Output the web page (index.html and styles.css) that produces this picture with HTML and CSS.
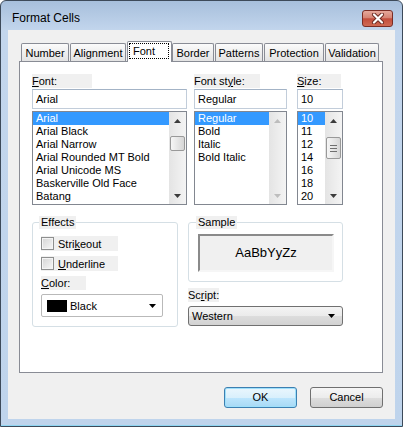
FILE: index.html
```html
<!DOCTYPE html>
<html>
<head>
    <title>Format Cells</title>
    <link rel="stylesheet" href="styles.css">
</head>
<body>
<div class="window">
    <div class="titlebar">
        <span class="title">Format Cells</span>
        <div class="close-btn">
            <svg width="14" height="11" viewBox="0 0 14 11">
                <path d="M3 1.5 L11 9.5 M11 1.5 L3 9.5" stroke="#6b2a22" stroke-width="4" stroke-linecap="round"/>
                <path d="M3 1.5 L11 9.5 M11 1.5 L3 9.5" stroke="#fff" stroke-width="2.2" stroke-linecap="round"/>
            </svg>
        </div>
    </div>
    <div class="client">
        <div class="tabs">
            <div class="tab">Number</div>
            <div class="tab">Alignment</div>
            <div class="tab selected"><span class="focus">Font</span></div>
            <div class="tab">Border</div>
            <div class="tab">Patterns</div>
            <div class="tab">Protection</div>
            <div class="tab">Validation</div>
        </div>
        <div class="panel">
            <div class="font-row">
                <div class="col col-font">
                    <div class="lbl lbl-font"><u>F</u>ont:</div>
                    <div class="textbox">Arial</div>
                    <div class="listbox">
                        <ul class="items">
                            <li class="sel">Arial</li>
                            <li>Arial Black</li>
                            <li>Arial Narrow</li>
                            <li>Arial Rounded MT Bold</li>
                            <li>Arial Unicode MS</li>
                            <li>Baskerville Old Face</li>
                            <li>Batang</li>
                        </ul>
                        <div class="vscroll">
                            <div class="arrow"><svg width="7" height="4"><path d="M0 4 L3.5 0 L7 4Z" fill="#3c3c3c"/></svg></div>
                            <div class="track"><div class="thumb thumb-font"></div></div>
                            <div class="arrow"><svg width="7" height="4"><path d="M0 0 L3.5 4 L7 0Z" fill="#3c3c3c"/></svg></div>
                        </div>
                    </div>
                </div>
                <div class="col col-style">
                    <div class="lbl lbl-style">Font st<u>y</u>le:</div>
                    <div class="textbox">Regular</div>
                    <div class="listbox">
                        <ul class="items">
                            <li class="sel">Regular</li>
                            <li>Bold</li>
                            <li>Italic</li>
                            <li>Bold Italic</li>
                        </ul>
                        <div class="vscroll">
                            <div class="arrow"><svg width="7" height="4"><path d="M0 4 L3.5 0 L7 4Z" fill="#bdbdbd"/></svg></div>
                            <div class="track"></div>
                            <div class="arrow"><svg width="7" height="4"><path d="M0 0 L3.5 4 L7 0Z" fill="#bdbdbd"/></svg></div>
                        </div>
                    </div>
                </div>
                <div class="col col-size">
                    <div class="lbl lbl-size"><u>S</u>ize:</div>
                    <div class="textbox">10</div>
                    <div class="listbox">
                        <ul class="items">
                            <li class="sel">10</li>
                            <li>11</li>
                            <li>12</li>
                            <li>14</li>
                            <li>16</li>
                            <li>18</li>
                            <li>20</li>
                        </ul>
                        <div class="vscroll">
                            <div class="arrow"><svg width="7" height="4"><path d="M0 4 L3.5 0 L7 4Z" fill="#3c3c3c"/></svg></div>
                            <div class="track">
                                <div class="thumb thumb-size">
                                    <span class="grip"></span><span class="grip"></span><span class="grip"></span>
                                </div>
                            </div>
                            <div class="arrow"><svg width="7" height="4"><path d="M0 0 L3.5 4 L7 0Z" fill="#3c3c3c"/></svg></div>
                        </div>
                    </div>
                </div>
            </div>

            <div class="lower-row">
                <fieldset class="group group-effects">
                    <legend>Effects</legend>
                    <div class="check"><span class="box"></span><span>Stri<u>k</u>eout</span></div>
                    <div class="check"><span class="box"></span><span><u>U</u>nderline</span></div>
                    <div class="lbl lbl-color"><u>C</u>olor:</div>
                    <div class="combo combo-color">
                        <span class="swatch"></span>
                        <span class="combo-text">Black</span>
                        <svg width="7" height="4"><path d="M0 0 L3.5 4 L7 0Z" fill="#000"/></svg>
                    </div>
                </fieldset>
                <div class="right-col">
                    <fieldset class="group group-sample">
                        <legend>Sample</legend>
                        <div class="sample">AaBbYyZz</div>
                    </fieldset>
                    <div class="lbl lbl-script">Sc<u>r</u>ipt:</div>
                    <div class="combo combo-script">
                        <span class="combo-text">Western</span>
                        <svg width="7" height="4"><path d="M0 0 L3.5 4 L7 0Z" fill="#000"/></svg>
                    </div>
                </div>
            </div>
        </div>
        <div class="buttons">
            <div class="btn btn-default">OK</div>
            <div class="btn">Cancel</div>
        </div>
    </div>
</div>
</body>
</html>
```

FILE: styles.css
```css
body {
    margin: 0;
    padding: 0;
    font-family: "Liberation Sans", Arial, sans-serif;
    font-size: 11px;
    color: #000;
    background: #fff;
}
.window {
    width: 403px;
    height: 427px;
    box-sizing: border-box;
    border: 1px solid #3d4a5a;
    border-radius: 6px 6px 0 0;
    background: linear-gradient(to bottom, #a7bfdc 0px, #c3d6ed 30px, #bfd4ec 100%);
    box-shadow: inset 0 -1px #8fd6f2;
    padding: 0 7px 7px 7px;
    display: flex;
    flex-direction: column;
}
.titlebar {
    height: 29px;
    display: flex;
    justify-content: space-between;
    align-items: flex-start;
}
.title {
    font-size: 12px;
    line-height: 14px;
    padding: 10px 0 0 4px;
}
.close-btn {
    width: 29px;
    height: 15px;
    margin: 9px 2px 0 0;
    border: 1px solid #7a2d25;
    border-radius: 3px;
    background: linear-gradient(to bottom, #e6a99c 0%, #d68474 45%, #c34d3c 52%, #cf6a54 100%);
    display: flex;
    align-items: center;
    justify-content: center;
}
.client {
    flex: 1;
    background: #f0f0f0;
    padding: 11px 12px 0 11px;
}

/* tab strip */
.tabs {
    display: grid;
    grid-template-columns: 49px 57px 45px 43px 49px 61px 55px;
    align-items: end;
    padding-left: 2px;
    position: relative;
    z-index: 1;
}
.tab {
    height: 17px;
    margin-right: 1px;
    border: 1px solid #898c95;
    border-bottom: none;
    border-radius: 2px 2px 0 0;
    background: linear-gradient(to bottom, #fbfbfb, #e3e3e3);
    line-height: 18px;
    text-align: center;
}
.tab.selected {
    height: 20px;
    margin: 0 0 -1px 0;
    background: #fff;
    text-align: left;
}
.focus {
    display: block;
    height: 14px;
    margin: 1px 2px 0 1px;
    padding-left: 3px;
    border: 1px dotted #000;
    line-height: 14px;
}
.panel {
    height: 312px;
    box-sizing: border-box;
    border: 1px solid #898c95;
    background: #fff;
    padding: 12px;
}

/* font / style / size lists */
.font-row {
    display: flex;
}
.col-font { width: 155px; margin-right: 7px; }
.col-style { width: 93px; margin-right: 10px; }
.col-size { width: 46px; }
.lbl {
    height: 14px;
    line-height: 14px;
    background: #f0f0f0;
    margin-bottom: 1px;
}
.lbl-font { width: 60px; }
.lbl-style { width: 66px; }
.lbl-size { width: 44px; }
.textbox {
    height: 18px;
    line-height: 18px;
    border: 1px solid #c2cdda;
    border-top-color: #a3b3c6;
    padding-left: 3px;
    margin-bottom: 2px;
}
.listbox {
    display: flex;
    height: 94px;
    box-sizing: border-box;
    border: 1px solid #828790;
}
.items {
    flex: 1;
    list-style: none;
    margin: 0;
    padding: 0;
    overflow: hidden;
}
.items li {
    height: 13px;
    line-height: 13px;
    padding-left: 3px;
    white-space: nowrap;
}
.items li.sel {
    background: #3399ff;
    color: #fff;
}
.vscroll {
    width: 17px;
    display: flex;
    flex-direction: column;
    background: linear-gradient(to right, #e4e4e4, #f4f4f4);
}
.arrow {
    height: 17px;
    display: flex;
    align-items: center;
    justify-content: center;
}
.track {
    flex: 1;
}
.thumb {
    margin: 0 1px;
    box-sizing: border-box;
    border: 1px solid #999;
    border-radius: 2px;
    background: linear-gradient(to right, #f6f6f6, #e6e6e6 50%, #d6d6d6);
}
.thumb-font {
    margin-top: 7px;
    height: 15px;
}
.thumb-size {
    margin-top: 8px;
    height: 22px;
    display: flex;
    flex-direction: column;
    align-items: center;
    justify-content: center;
    gap: 2px;
}
.grip {
    width: 7px;
    height: 1px;
    background: #6f6f6f;
}

/* effects, sample, script */
.lower-row {
    display: flex;
    margin-top: 11px;
}
.group {
    margin: 0;
    border: 1px solid #d5dfe5;
    border-radius: 3px;
}
.group legend {
    padding: 0 2px;
    margin-left: -2px;
    height: 13px;
    line-height: 13px;
    background: #f0f0f0;
}
.group-effects {
    width: 146px;
    box-sizing: border-box;
    height: 111px;
    padding: 7px 8px 8px 8px;
    margin-right: 10px;
}
.check {
    display: flex;
    align-items: center;
    gap: 4px;
    width: 77px;
    height: 15px;
    background: #f0f0f0;
    margin-bottom: 5px;
}
.box {
    width: 11px;
    height: 11px;
    border: 1px solid #8e8f8f;
    background: linear-gradient(135deg, #d4d4d4, #f7f7f7);
    box-shadow: inset 0 0 0 1px #f4f4f4;
}
.lbl-color {
    width: 45px;
    margin-bottom: 4px;
}
.combo {
    display: flex;
    align-items: center;
    box-sizing: border-box;
}
.combo-color {
    width: 122px;
    height: 23px;
    border: 1px solid #b9b9b9;
    border-radius: 2px;
    background: #fff;
    padding: 0 6px 0 5px;
}
.swatch {
    width: 20px;
    height: 12px;
    background: #000;
    margin-right: 3px;
}
.combo-text {
    flex: 1;
}
.right-col {
    width: 155px;
}
.group-sample {
    height: 66px;
    box-sizing: border-box;
    padding: 5px 8px 9px 9px;
}
.sample {
    height: 38px;
    box-sizing: border-box;
    border: 2px solid #f6f6f6;
    border-top-color: #8a8a8a;
    border-left-color: #8a8a8a;
    background: #f0f0f0;
    font-family: "Liberation Sans", Arial, sans-serif;
    font-size: 13px;
    line-height: 34px;
    text-align: center;
}
.lbl-script {
    width: 31px;
    margin: 6px 0 4px 0;
}
.combo-script {
    height: 20px;
    border: 1px solid #707070;
    border-radius: 3px;
    background: linear-gradient(to bottom, #f4f4f4, #ebebeb 50%, #dddddd 50%, #d2d2d2);
    padding: 0 7px 0 3px;
}

/* dialog buttons */
.buttons {
    display: flex;
    justify-content: flex-end;
    gap: 13px;
    margin: 14px 0 0 0;
}
.btn {
    width: 73px;
    height: 21px;
    box-sizing: border-box;
    border: 1px solid #707070;
    border-radius: 3px;
    background: linear-gradient(to bottom, #f6f6f6, #ececec 50%, #dedede 50%, #d0d0d0);
    line-height: 19px;
    text-align: center;
}
.btn-default {
    border-color: #3c7fb1;
    background: linear-gradient(to bottom, #eaf6fd, #d9f0fc 50%, #bee6fd 50%, #a7d9f5);
    box-shadow: inset 0 0 0 1px #9ee0fb;
}
```
